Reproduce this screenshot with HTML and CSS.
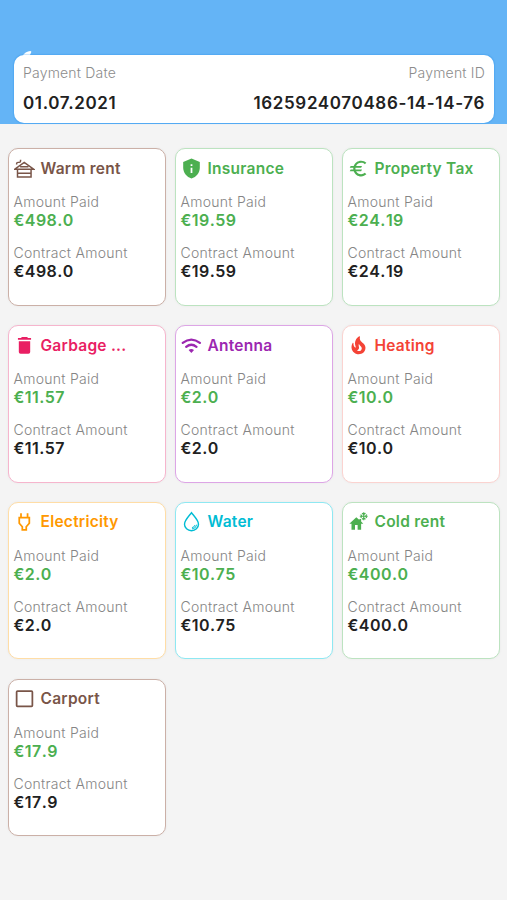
FILE: index.html
```html
<!DOCTYPE html>
<html lang="en">
<head>
<meta charset="utf-8">
<title>Payment details</title>
<link rel="stylesheet" href="styles.css">
</head>
<body>
<header class="header">
  <span class="header-arc"></span>
  <section class="summary">
    <div class="summary-col"><span class="summary-label">Payment Date</span><strong class="summary-value">01.07.2021</strong></div>
    <div class="summary-col summary-end"><span class="summary-label">Payment ID</span><strong class="summary-value">1625924070486-14-14-76</strong></div>
  </section>
</header>
<main class="grid">
  <article class="card brown">
    <h2 class="title"><svg class="icon" viewBox="0 0 24 24" fill="none" stroke="currentColor" stroke-width="1.7"><path d="M1 12.800 11.700 5l10.700 7.800zM4 12.800v9h15.500v-9M4 17.300h15.500M7 10h9.500M3 7.500V6.500q0-1.500 1.500-1.500h1.500q1.500 0 1.500-1.500V2"/></svg><span>Warm rent</span></h2>
    <p class="label">Amount Paid</p><p class="value paid">€498.0</p>
    <p class="label">Contract Amount</p><p class="value">€498.0</p>
  </article>
  <article class="card green">
    <h2 class="title"><svg class="icon" viewBox="0 0 24 24" fill="currentColor"><path d="M12 .700 2.500 4.700V11c0 5.550 4.100 10.740 9.500 12.300 5.400-1.560 9.500-6.750 9.500-12.300V4.700z"/><path fill="#fff" d="M11 7h2v2h-2zM11 11h2v6h-2z"/></svg><span>Insurance</span></h2>
    <p class="label">Amount Paid</p><p class="value paid">€19.59</p>
    <p class="label">Contract Amount</p><p class="value">€19.59</p>
  </article>
  <article class="card green">
    <h2 class="title"><svg class="icon" viewBox="0 0 24 24" fill="currentColor"><path d="M15 18.500c-2.510 0-4.680-1.420-5.760-3.500H15l1-2H8.580c-.05-.33-.08-.66-.08-1s.03-.67.08-1H15l1-2H9.240C10.320 6.920 12.500 5.500 15 5.500c1.610 0 3.090.590 4.230 1.570L21 5.300C19.410 3.870 17.300 3 15 3c-3.920 0-7.240 2.510-8.480 6H3l-1 2h4.060c-.08.66-.08 1.340 0 2H3l-1 2h4.520c1.240 3.490 4.560 6 8.480 6 2.310 0 4.410-.870 6-2.300l-1.780-1.770c-1.130.980-2.600 1.570-4.220 1.570z"/></svg><span>Property Tax</span></h2>
    <p class="label">Amount Paid</p><p class="value paid">€24.19</p>
    <p class="label">Contract Amount</p><p class="value">€24.19</p>
  </article>
  <article class="card pink">
    <h2 class="title"><svg class="icon" viewBox="0 0 24 24" fill="currentColor"><path d="M5.500 7h13v12.500q0 2-2 2h-9q-2 0-2-2zM4.500 3.500H8l1-1.200h6l1 1.200h3.500v2h-15z"/></svg><span>Garbage ...</span></h2>
    <p class="label">Amount Paid</p><p class="value paid">€11.57</p>
    <p class="label">Contract Amount</p><p class="value">€11.57</p>
  </article>
  <article class="card purple">
    <h2 class="title"><svg class="icon" viewBox="0 0 24 24" fill="none" stroke="currentColor" stroke-width="2.600" stroke-linecap="round"><path d="M2 9q9.800-7.500 19.600 0M5.900 13.500q5.900-4.700 11.800 0"/><path fill="currentColor" stroke="none" d="M8.700 17q3.100-2.200 6.200 0l-3.100 3.500z"/></svg><span>Antenna</span></h2>
    <p class="label">Amount Paid</p><p class="value paid">€2.0</p>
    <p class="label">Contract Amount</p><p class="value">€2.0</p>
  </article>
  <article class="card red">
    <h2 class="title"><svg class="icon" viewBox="0 0 24 24" fill="currentColor"><path d="M19.480 12.350c-1.570-4.080-7.160-4.300-5.810-10.230.1-.44-.370-.780-.750-.550C9.290 3.710 6.680 8 8.870 13.620c.18.460-.360.890-.750.590-1.810-1.370-2-3.340-1.840-4.750.06-.520-.620-.770-.910-.340C4.690 10.160 4 11.840 4 14.370c.38 5.600 5.110 7.320 6.810 7.540 2.430.310 5.060-.140 6.950-1.870 2.080-1.930 2.840-5.010 1.720-7.690zm-9.280 5.030c1.440-.350 2.180-1.390 2.380-2.310.330-1.430-.960-2.830-.090-5.090.330 1.870 3.270 3.040 3.270 5.080.080 2.530-2.660 4.700-5.560 2.320z"/></svg><span>Heating</span></h2>
    <p class="label">Amount Paid</p><p class="value paid">€10.0</p>
    <p class="label">Contract Amount</p><p class="value">€10.0</p>
  </article>
  <article class="card orange">
    <h2 class="title"><svg class="icon" viewBox="0 0 24 24" fill="none" stroke="currentColor" stroke-width="2"><path d="M8 2.500V8M15.500 2.500V8M6 7.500h11.500v6.500L14 18v3.500H9.500V18L6 14z"/></svg><span>Electricity</span></h2>
    <p class="label">Amount Paid</p><p class="value paid">€2.0</p>
    <p class="label">Contract Amount</p><p class="value">€2.0</p>
  </article>
  <article class="card cyan">
    <h2 class="title"><svg class="icon" viewBox="0 0 24 24" fill="none" stroke="currentColor" stroke-width="1.600"><path d="M12 2C8.500 6.500 4 11 4 15a8 7.500 0 0 0 16 0C20 11 15.500 6.500 12 2z"/><path d="M18 15.500a6 6 0 0 1-5.500 5M16 16a4 4 0 0 1-3.500 3" stroke-width="1.100"/></svg><span>Water</span></h2>
    <p class="label">Amount Paid</p><p class="value paid">€10.75</p>
    <p class="label">Contract Amount</p><p class="value">€10.75</p>
  </article>
  <article class="card green">
    <h2 class="title"><svg class="icon" viewBox="0 0 24 24" fill="currentColor"><path d="M9.500 7 1.500 14.500H4V21.500h4V16h3v5.500h4v-7h2.500L15 12V9h-2v1.200z"/><path fill="none" stroke="currentColor" stroke-width="1.300" d="M18 1.500v9M13.500 6h9M16 2.500l2 1.500 2-1.500M16 9.500l2-1.500 2 1.500M14.500 4l1.500 2-1.500 2M21.500 4 20 6l1.500 2"/></svg><span>Cold rent</span></h2>
    <p class="label">Amount Paid</p><p class="value paid">€400.0</p>
    <p class="label">Contract Amount</p><p class="value">€400.0</p>
  </article>
  <article class="card brown">
    <h2 class="title"><svg class="icon" viewBox="0 0 24 24" fill="none" stroke="currentColor" stroke-width="2"><rect x="3" y="3.500" width="18" height="17.500" rx="1"/></svg><span>Carport</span></h2>
    <p class="label">Amount Paid</p><p class="value paid">€17.9</p>
    <p class="label">Contract Amount</p><p class="value">€17.9</p>
  </article>
</main>
</body>
</html>
```
FILE: styles.css
```css
* { box-sizing: border-box; }
body {
  margin: 0;
  min-height: 900px;
  background: #f4f4f4;
  font-family: Inter, "Liberation Sans", sans-serif;
  color: #212121;
}
.header {
  position: relative;
  height: 124px;
  padding: 55px 13px 0 14px;
  background: #64b4f6;
}
.header-arc {
  position: absolute;
  left: 23px;
  top: 51px;
  width: 7px;
  height: 8px;
  border-radius: 7px 2px 0 0;
  background: #fff;
  transform: skewX(-25deg);
}
.summary {
  position: relative;
  display: flex;
  justify-content: space-between;
  height: 68px;
  padding: 8px 9px;
  border-radius: 10px;
  background: #fff;
  box-shadow: 0 0 1px 1px rgba(33, 140, 230, .25);
}
.summary-col { display: flex; flex-direction: column; }
.summary-end { align-items: flex-end; }
.summary-label {
  font-size: 14px;
  font-weight: 300;
  line-height: 20px;
  letter-spacing: .2px;
  color: #8c8c8c;
}
.summary-value {
  margin-top: 10px;
  font-size: 17px;
  font-weight: 600;
  line-height: 21px;
  letter-spacing: .65px;
}
.grid {
  display: grid;
  grid-template-columns: repeat(3, 158px);
  grid-auto-rows: 157.500px;
  gap: 19.300px 9px;
  padding: 24.300px 8px;
}
.card {
  padding: 8px 4.500px 0;
  border: 1px solid var(--line);
  border-radius: 10px;
  background: #fff;
  box-shadow: 0 0 3px rgba(0, 0, 0, .05);
}
.title {
  display: flex;
  align-items: center;
  gap: 6px;
  height: 22px;
  margin: 0 0 13px;
  color: var(--tone);
  font-size: 15.500px;
  font-weight: 600;
  letter-spacing: .25px;
  white-space: nowrap;
}
.icon { flex: none; width: 21px; height: 21px; }
.label {
  margin: 0;
  font-size: 14px;
  font-weight: 300;
  line-height: 19px;
  letter-spacing: .27px;
  color: #858585;
}
.value {
  margin: 0 0 14px;
  font-size: 16px;
  font-weight: 600;
  line-height: 18px;
  letter-spacing: .45px;
  font-kerning: none;
}
.paid { color: #4caf50; }
.brown { --tone: #795548; --line: #cbb0a7; }
.green { --tone: #4caf50; --line: #bce3c0; }
.pink { --tone: #e91e63; --line: #f6b5cd; }
.purple { --tone: #9c27b0; --line: #dda5e6; }
.red { --tone: #f44336; --line: #fbd3d0; }
.orange { --tone: #ff9800; --line: #ffdda6; }
.cyan { --tone: #00bcd4; --line: #8ee8f2; }
```
